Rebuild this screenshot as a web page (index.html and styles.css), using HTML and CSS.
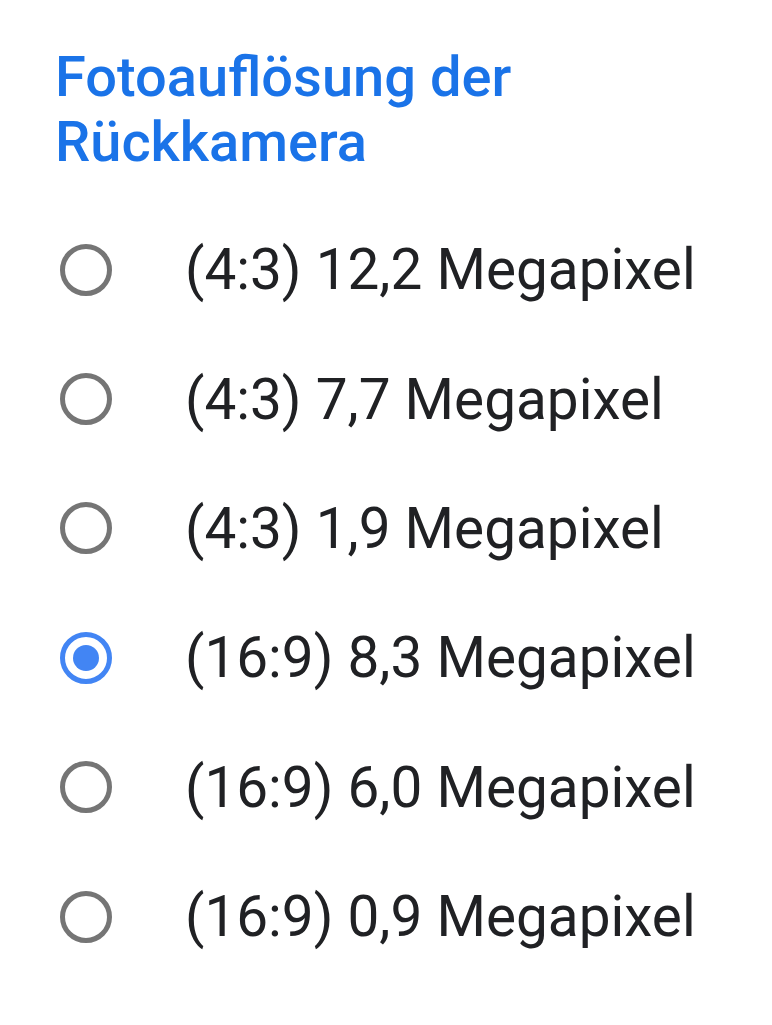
FILE: index.html
```html
<!DOCTYPE html>
<html lang="de">
<head>
<meta charset="utf-8">
<title>Fotoauflösung der Rückkamera</title>
<link rel="stylesheet" href="styles.css">
</head>
<body>
<div class="dialog">
  <h1 class="title">Fotoauflösung der Rückkamera</h1>
  <ul class="options">
    <li class="option"><span class="radio"></span><span class="label">(4:3) 12,2 Megapixel</span></li>
    <li class="option"><span class="radio"></span><span class="label">(4:3) 7,7 Megapixel</span></li>
    <li class="option"><span class="radio"></span><span class="label">(4:3) 1,9 Megapixel</span></li>
    <li class="option selected"><span class="radio"></span><span class="label">(16:9) 8,3 Megapixel</span></li>
    <li class="option"><span class="radio"></span><span class="label">(16:9) 6,0 Megapixel</span></li>
    <li class="option"><span class="radio"></span><span class="label">(16:9) 0,9 Megapixel</span></li>
  </ul>
</div>
</body>
</html>
```
FILE: styles.css
```css
html, body {
  margin: 0;
  padding: 0;
  background: #ffffff;
}
body {
  font-family: Roboto, "Noto Sans", "Liberation Sans", sans-serif;
}
.dialog {
  padding: 45px 0 0 55px;
}
.title {
  margin: 0;
  width: 540px;
  font-size: 56px;
  line-height: 65px;
  font-weight: 500;
  color: #1a73e8;
}
.options {
  list-style: none;
  margin: 30px 0 0 0;
  padding: 0 0 0 5px;
}
.option {
  display: flex;
  align-items: center;
  height: 129.4px;
  gap: 73px;
}
.radio {
  flex: none;
  width: 52px;
  height: 52px;
  box-sizing: border-box;
  border: 5px solid #757575;
  border-radius: 50%;
  display: flex;
  align-items: center;
  justify-content: center;
}
.selected .radio {
  border-color: #4285f4;
}
.selected .radio::after {
  content: "";
  width: 26px;
  height: 26px;
  border-radius: 50%;
  background: #4285f4;
}
.label {
  font-size: 56.7px;
  color: #202124;
  white-space: nowrap;
}
```
